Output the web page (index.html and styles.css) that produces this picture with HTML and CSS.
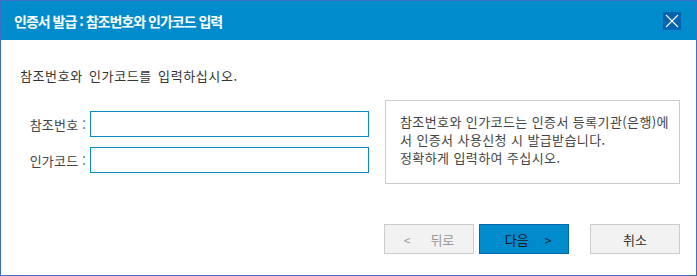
FILE: index.html
```html
<!DOCTYPE html>
<html lang="ko">
<head>
  <meta charset="UTF-8">
  <title>인증서 발급</title>
  <link rel="stylesheet" href="styles.css">
</head>
<body>
  <div class="dialog">
    <div class="title-bar">
      <span class="title">인증서 발급 : 참조번호와 인가코드 입력</span>
      <button class="close-btn" aria-label="닫기">
        <svg width="14" height="14" viewBox="0 0 14 14">
          <path d="M1 1 L13 13 M13 1 L1 13" stroke="#fff" stroke-width="1.2" fill="none"/>
        </svg>
      </button>
    </div>

    <div class="content">
      <p class="intro">참조번호와 인가코드를 입력하십시오.</p>

      <div class="form-area">
        <div class="fields">
          <div class="field-row">
            <label class="field-label" for="refNo">참조번호 :</label>
            <input class="field-input" id="refNo" type="text">
          </div>
          <div class="field-row">
            <label class="field-label" for="authCode">인가코드 :</label>
            <input class="field-input" id="authCode" type="text">
          </div>
        </div>
        <div class="info-box">
          참조번호와 인가코드는 인증서 등록기관(은행)에<br>
          서 인증서 사용신청 시 발급받습니다.<br>
          정확하게 입력하여 주십시오.
        </div>
      </div>

      <div class="buttons">
        <button class="btn btn-prev" disabled><span class="arrow">&lt;</span>뒤로</button>
        <button class="btn btn-next">다음<span class="arrow arrow-right">&gt;</span></button>
        <button class="btn btn-cancel">취소</button>
      </div>
    </div>
  </div>
</body>
</html>
```

FILE: styles.css
```css
* {
  box-sizing: border-box;
}

body {
  margin: 0;
  font-family: "Noto Sans CJK KR", "Noto Sans", sans-serif;
  background: #fff;
}

.dialog {
  width: 697px;
  height: 276px;
  border: 1px solid #3a6fc4;
  display: flex;
  flex-direction: column;
  background: #fff;
}

.title-bar {
  height: 39px;
  background: #008ccc;
  display: flex;
  align-items: center;
  justify-content: space-between;
  padding: 0 15px 0 13px;
}

.title {
  color: #fff;
  font-size: 14px;
  font-weight: bold;
  letter-spacing: -1px;
}

.close-btn {
  width: 18px;
  height: 18px;
  padding: 0;
  border: none;
  background: #0062b0;
  display: flex;
  align-items: center;
  justify-content: center;
  margin-top: 1px;
}

.content {
  flex: 1;
  padding: 0 16px 0 19px;
  display: flex;
  flex-direction: column;
}

.intro {
  margin: 27px 0 0;
  font-size: 13px;
  line-height: 18px;
  letter-spacing: 0.6px;
  word-spacing: 2px;
  color: #333;
}

.form-area {
  display: flex;
  align-items: center;
  justify-content: space-between;
  margin-top: 15px;
}

.fields {
  display: flex;
  flex-direction: column;
  gap: 10px;
}

.field-row {
  display: flex;
  align-items: center;
}

.field-label {
  width: 70px;
  text-align: right;
  padding-right: 4px;
  font-size: 13px;
  letter-spacing: 0.2px;
  color: #444;
}

.field-input {
  width: 279px;
  height: 26px;
  border: 1px solid #0a8ac6;
  outline: none;
  font-family: inherit;
  font-size: 12px;
  padding: 0 4px;
}

.info-box {
  width: 295px;
  height: 84px;
  border: 1px solid #cccccc;
  padding: 12px 6px 12px 14px;
  font-size: 13px;
  line-height: 18px;
  letter-spacing: 0.4px;
  color: #444;
  white-space: nowrap;
}

.buttons {
  display: flex;
  justify-content: flex-end;
  margin-top: 40px;
}

.btn {
  width: 90px;
  height: 30px;
  font-family: inherit;
  font-size: 13px;
  border: 1px solid #cccccc;
  background: #f2f2f2;
  color: #333;
  padding: 0;
}

.btn-prev {
  color: #999;
}

.btn-next {
  margin-left: 5px;
  padding-left: 8px;
  background: #008ccc;
  border-color: #0066a8;
  color: #1a1a1a;
}

.btn-cancel {
  margin-left: 21px;
}

.arrow {
  font-size: 12px;
  margin-right: 20px;
}

.arrow-right {
  margin-right: 0;
  margin-left: 16px;
}
```
